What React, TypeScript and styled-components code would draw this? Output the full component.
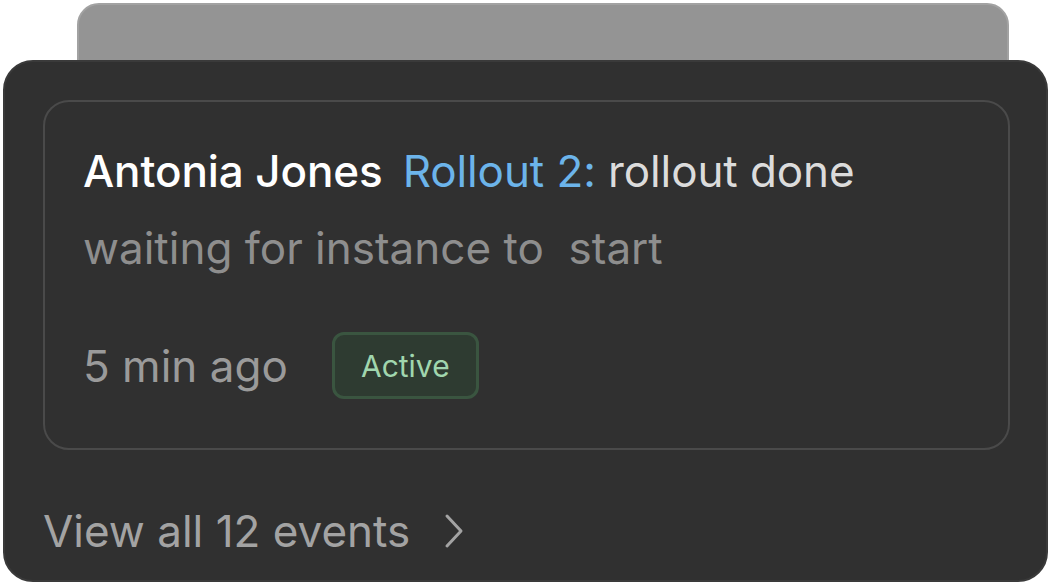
import React from "react";
import styled, { createGlobalStyle } from "styled-components";

const Global = createGlobalStyle`
  html, body { margin: 0; padding: 0; background: #ffffff; }
  body { font-family: Inter, "Noto Sans", sans-serif; }
`;

const Page = styled.div`
  display: flex;
  flex-direction: column;
  padding: 3px 0 0 3px;
  width: 1049px;
  height: 583px;
  box-sizing: border-box;
  overflow: hidden;
`;

const BackCard = styled.div`
  margin-left: 74px;
  width: 932px;
  height: 90px;
  box-sizing: border-box;
  background: #949494;
  border: 2px solid #a2a2a2;
  border-radius: 22px;
`;

const FrontCard = styled.div`
  position: relative;
  margin-top: -33px;
  width: 1045px;
  height: 522px;
  box-sizing: border-box;
  background: #303030;
  border: 2px solid #3a3a3a;
  border-radius: 30px;
  padding: 38px 36px 0 38px;
  display: flex;
  flex-direction: column;
`;

const EventCard = styled.div`
  height: 350px;
  box-sizing: border-box;
  border: 2px solid #4a4a4a;
  border-radius: 26px;
  padding: 31px 38px 0 38px;
  display: flex;
  flex-direction: column;
`;

const Title = styled.div`
  font-size: 44px;
  line-height: 77px;
  white-space: nowrap;
  letter-spacing: -0.1px;
`;

const Name = styled.span`
  color: #ffffff;
  font-weight: 500;
`;

const Rollout = styled.span`
  color: #6cb4ea;
  margin-left: 20px;
`;

const Status = styled.span`
  color: #dcdcdc;
`;

const Detail = styled.div`
  font-size: 44px;
  line-height: 77px;
  color: #8e8e8e;
  white-space: pre;
`;

const Meta = styled.div`
  display: flex;
  align-items: center;
  gap: 44px;
  margin-top: 45px;
`;

const Time = styled.span`
  font-size: 44px;
  color: #9a9a9a;
`;

const Badge = styled.span`
  display: inline-flex;
  align-items: center;
  justify-content: center;
  width: 147px;
  height: 67px;
  box-sizing: border-box;
  background: #2e3b31;
  border: 3px solid #3a5540;
  border-radius: 12px;
  color: #a0d6ae;
  font-size: 30px;
`;

const Footer = styled.div`
  display: flex;
  align-items: center;
  gap: 34px;
  margin-top: 51px;
  font-size: 44px;
  line-height: 60px;
  color: #a3a3a3;
`;

const Chevron = () => (
  <svg width="20" height="36" viewBox="0 0 20 36" fill="none">
    <path d="M3 3 L17 18 L3 33" stroke="#a3a3a3" strokeWidth="3" strokeLinecap="round" strokeLinejoin="round" />
  </svg>
);

export default function App() {
  return (
    <>
      <Global />
      <Page>
        <BackCard />
        <FrontCard>
          <EventCard>
            <Title>
              <Name>Antonia Jones</Name>
              <Rollout>Rollout 2:</Rollout> <Status>rollout done</Status>
            </Title>
            <Detail>waiting for instance to  start</Detail>
            <Meta>
              <Time>5 min ago</Time>
              <Badge>Active</Badge>
            </Meta>
          </EventCard>
          <Footer>
            <span>View all 12 events</span>
            <Chevron />
          </Footer>
        </FrontCard>
      </Page>
    </>
  );
}
